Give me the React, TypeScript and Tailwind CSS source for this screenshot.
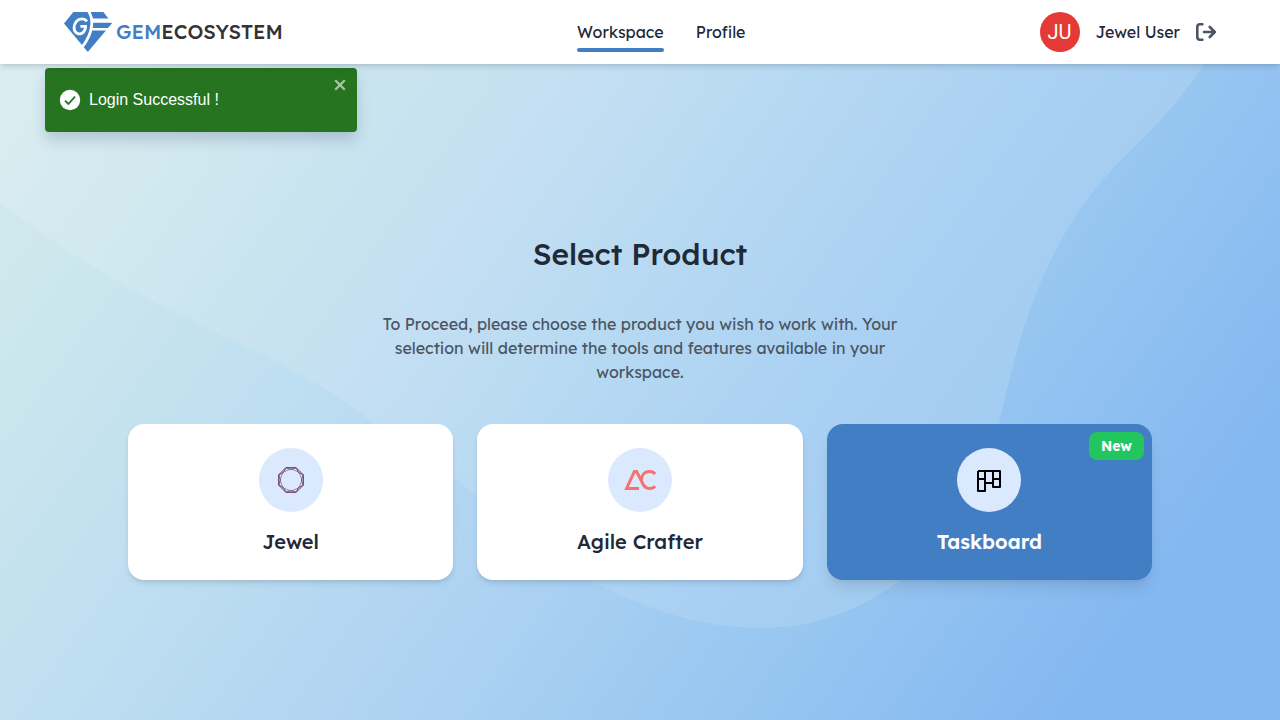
import React from "react";

function GemMark() {
  return (
    <svg className="h-10 w-12" viewBox="0 0 48 40" aria-hidden="true">
      <path fill="#417ec4" d="M9.4 0H39.4L48 11.2L23.8 40L0 11.4Z" />
      <path fill="#fff" d="M27.5 6.6H48V10.8H27.5ZM27.5 16H48V18.6H27.5Z" />
      <path fill="none" stroke="#fff" strokeWidth="2.8" d="M24.4 -1C29.4 6 30 20 18.2 35" />
      <path
        fill="none"
        stroke="#fff"
        strokeWidth="2.8"
        d="M23 9.4C20.6 6.4 15.6 6 12.6 9.2C9.4 12.6 9.2 18 12.2 20.6C15.4 23.2 21.2 21.6 21.6 14.4H16.4"
      />
    </svg>
  );
}

function LogoutIcon() {
  return (
    <svg className="h-5 w-5" viewBox="0 0 20 20" fill="none" stroke="#4b5563" strokeWidth="2.6" strokeLinecap="round" strokeLinejoin="round" aria-hidden="true">
      <path d="M6.4 2.2H4Q1.3 2.2 1.3 4.9V15.1Q1.3 17.8 4 17.8H6.4" />
      <path d="M8 10H18.6M13.8 5L18.8 10L13.8 15" />
    </svg>
  );
}

function ringPoints(count: number, offset: number, outer: number, inner: number) {
  return Array.from({ length: count }, (_, i) => {
    const a = (((i * 360) / count + offset) * Math.PI) / 180;
    const r = i % 2 === 0 ? outer : inner;
    return `${(16 + r * Math.cos(a)).toFixed(2)},${(16 + r * Math.sin(a)).toFixed(2)}`;
  }).join(" ");
}

function JewelIcon() {
  return (
    <svg className="h-8 w-8" viewBox="0 0 32 32" fill="none" stroke="#6b4164" strokeLinejoin="round" aria-hidden="true">
      <polygon points={ringPoints(8, 22.5, 13.4, 13.4)} strokeWidth="1" />
      <polygon points={ringPoints(16, 22.5, 13.2, 10.6)} strokeWidth="0.9" />
      <polygon points={ringPoints(8, 0, 11.2, 11.2)} strokeWidth="0.6" />
    </svg>
  );
}

function AgileIcon() {
  return (
    <svg className="h-8 w-8" viewBox="0 0 32 32" fill="none" stroke="#f8706b" strokeWidth="3" aria-hidden="true">
      <path d="M15 24.4H2.6L10.4 7.4H12.6L18.6 19.4C20.4 23.4 23 24.6 26 24.4C28 24.3 29.8 23.6 31.2 22.2" />
      <path d="M31.2 9.8C29.4 8.2 27.4 7.6 25.4 7.6C20.6 7.6 17.4 11.2 17.4 16.4" />
    </svg>
  );
}

function BoardIcon() {
  return (
    <svg className="h-8 w-8" viewBox="0 0 32 32" fill="none" stroke="#000" strokeWidth="2" strokeLinejoin="round" aria-hidden="true">
      <path d="M5 7H27V23H20V7M5 7V27H12V7M5 15H12M12 19H20M20 15H27" />
    </svg>
  );
}

const products = [
  { name: "Jewel", icon: <JewelIcon />, active: false },
  { name: "Agile Crafter", icon: <AgileIcon />, active: false },
  { name: "Taskboard", icon: <BoardIcon />, active: true },
];

function Backdrop() {
  return (
    <svg className="absolute inset-0 h-full w-full" viewBox="0 64 1280 656" preserveAspectRatio="none" aria-hidden="true">
      <defs>
        <linearGradient id="outer" gradientUnits="userSpaceOnUse" x1="0" y1="0" x2="1040" y2="744">
          <stop offset="0.1" stopColor="#cfe9ec" />
          <stop offset="0.2" stopColor="#cbe5ee" />
          <stop offset="0.27" stopColor="#c4e2ee" />
          <stop offset="0.35" stopColor="#bfdff1" />
          <stop offset="0.62" stopColor="#aad0f2" />
          <stop offset="0.76" stopColor="#9ac8f0" />
          <stop offset="0.87" stopColor="#91c1f2" />
          <stop offset="1" stopColor="#84b8f0" />
        </linearGradient>
        <linearGradient id="inner" gradientUnits="userSpaceOnUse" x1="0" y1="0" x2="995" y2="712">
          <stop offset="0.06" stopColor="#daedf1" />
          <stop offset="0.2" stopColor="#d0e8ef" />
          <stop offset="0.36" stopColor="#c6e2f0" />
          <stop offset="0.42" stopColor="#c4dff3" />
          <stop offset="0.56" stopColor="#b7daf2" />
          <stop offset="0.72" stopColor="#abd1f3" />
          <stop offset="0.9" stopColor="#a0cbf1" />
        </linearGradient>
      </defs>
      <rect y="64" width="1280" height="656" fill="url(#outer)" />
      <path
        fill="url(#inner)"
        d="M0 203C60 248 120 285 184 317S310 373 375 424C430 460 450 475 477 495S550 562 592 582S690 628 762 628C820 628 860 608 899 582C960 540 985 480 999 424C1020 329 1045 235 1126 155C1160 122 1180 100 1204 64H0Z"
      />
    </svg>
  );
}

function Toast() {
  return (
    <div role="status" className="absolute top-1 left-[45px] flex h-16 w-[312px] items-center gap-2 rounded-sm bg-[#267320] px-[14px] font-['Liberation_Sans',sans-serif] text-base text-white shadow-[0_8px_14px_rgba(60,70,110,0.22)]">
      <svg className="h-[22px] w-[22px]" viewBox="0 0 22 22" aria-hidden="true">
        <circle cx="11" cy="11" r="10.2" fill="#fff" />
        <path d="M6 11.6L9.4 15L16 7.6" fill="none" stroke="#267320" strokeWidth="1.8" />
      </svg>
      <p>Login Successful !</p>
      <button type="button" aria-label="Close" className="absolute top-[11px] right-[11px]">
        <svg className="h-3 w-3" viewBox="0 0 12 12" fill="none" stroke="#a9c9a6" strokeWidth="2.2" aria-hidden="true">
          <path d="M1.2 1.2L10.8 10.8M10.8 1.2L1.2 10.8" />
        </svg>
      </button>
    </div>
  );
}

export default function App() {
  return (
    <div className="flex min-h-screen flex-col font-[Lexend,Inter,sans-serif] text-[#1f2937]">
      <header className="relative z-10 flex h-16 items-center justify-between bg-white px-16 shadow-md">
        <a href="#home" className="flex items-center gap-1 text-xl font-medium text-[#333]">
          <GemMark />
          <span><span className="text-[#417ec4]">GEM</span>ECOSYSTEM</span>
        </a>
        <nav className="flex gap-8 text-base text-[#1f2937]">
          <a href="#workspace" aria-current="page" className="relative">
            Workspace
            <span className="absolute inset-x-0 -bottom-2 h-1 rounded-full bg-[#417ec4]" />
          </a>
          <a href="#profile">Profile</a>
        </nav>
        <div className="flex items-center gap-4">
          <span className="flex h-10 w-10 items-center justify-center rounded-full bg-[#e53935] font-[Roboto,sans-serif] text-xl text-white">JU</span>
          <span className="text-base">Jewel User</span>
          <button type="button" aria-label="Log out"><LogoutIcon /></button>
        </div>
      </header>
      <main className="relative flex flex-1 flex-col items-center justify-center">
        <Backdrop />
        <Toast />
        <section className="relative w-full max-w-5xl pt-8 text-center">
          <h1 className="mb-10 text-3xl leading-9 font-medium">Select Product</h1>
          <p className="mx-auto mb-10 max-w-[540px] text-base text-[#4b5563]">
            To Proceed, please choose the product you wish to work with. Your selection will determine the tools and features available in your workspace.
          </p>
          <div className="grid grid-cols-3 gap-6">
            {products.map((p) => (
              <button
                key={p.name}
                type="button"
                className={
                  p.active
                    ? "relative flex flex-col items-center gap-4 rounded-2xl bg-[#417ec4] p-6 text-white shadow-lg"
                    : "relative flex flex-col items-center gap-4 rounded-2xl bg-white p-6 shadow-md"
                }
              >
                <span className="flex h-16 w-16 items-center justify-center rounded-full bg-[#dbe9fe]">{p.icon}</span>
                <span className={p.active ? "text-xl font-semibold" : "text-xl font-medium"}>{p.name}</span>
                {p.active && (
                  <span className="absolute top-2 right-2 rounded-lg bg-[#22c55e] px-3 py-1 text-sm font-bold">New</span>
                )}
              </button>
            ))}
          </div>
        </section>
      </main>
    </div>
  );
}
